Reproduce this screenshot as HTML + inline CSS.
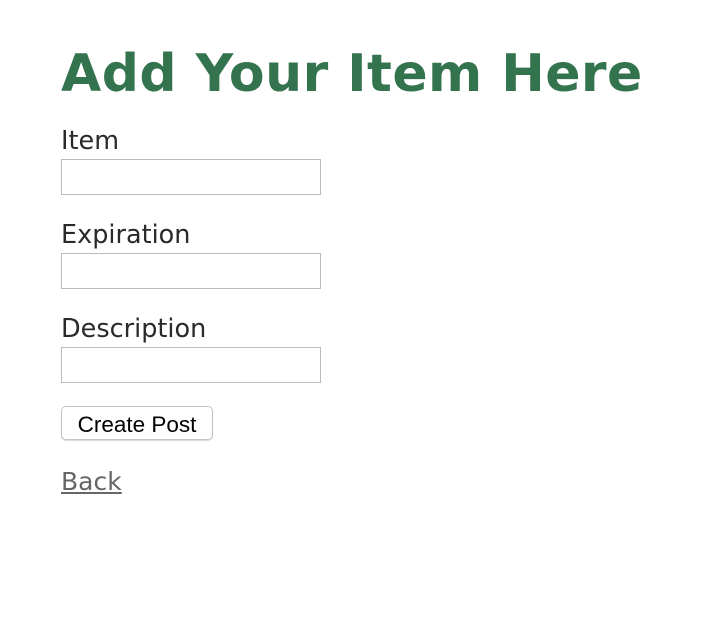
<!DOCTYPE html>
<html><head><style>
body{margin:0;background:#fff;font-family:"DejaVu Sans",Verdana,sans-serif;}
h1{position:absolute;left:61px;top:42px;margin:0;font-size:52px;font-weight:bold;color:#33734d;line-height:64px;white-space:nowrap;letter-spacing:0.45px}
.l{position:absolute;left:61px;font-size:25.5px;color:#2a2a2a;line-height:30px}
.i{position:absolute;left:61px;width:258px;height:34px;border:1px solid #bbb;background:#fff}
.b{position:absolute;left:61px;top:406px;width:150px;height:32px;border:1px solid #c4c4c4;border-radius:5px;box-shadow:0 1px 1px rgba(0,0,0,.15);font-family:"Liberation Sans",Arial,sans-serif;font-size:22.5px;line-height:35px;text-align:center;color:#000}
a{position:absolute;left:61px;top:466px;font-size:25px;color:#666;text-decoration:underline;line-height:32px}
</style></head><body>
<h1>Add Your Item Here</h1>
<div class="l" style="top:126px">Item</div>
<div class="i" style="top:159px"></div>
<div class="l" style="top:220px">Expiration</div>
<div class="i" style="top:253px"></div>
<div class="l" style="top:314px">Description</div>
<div class="i" style="top:347px"></div>
<div class="b">Create Post</div>
<a>Back</a>
</body></html>
